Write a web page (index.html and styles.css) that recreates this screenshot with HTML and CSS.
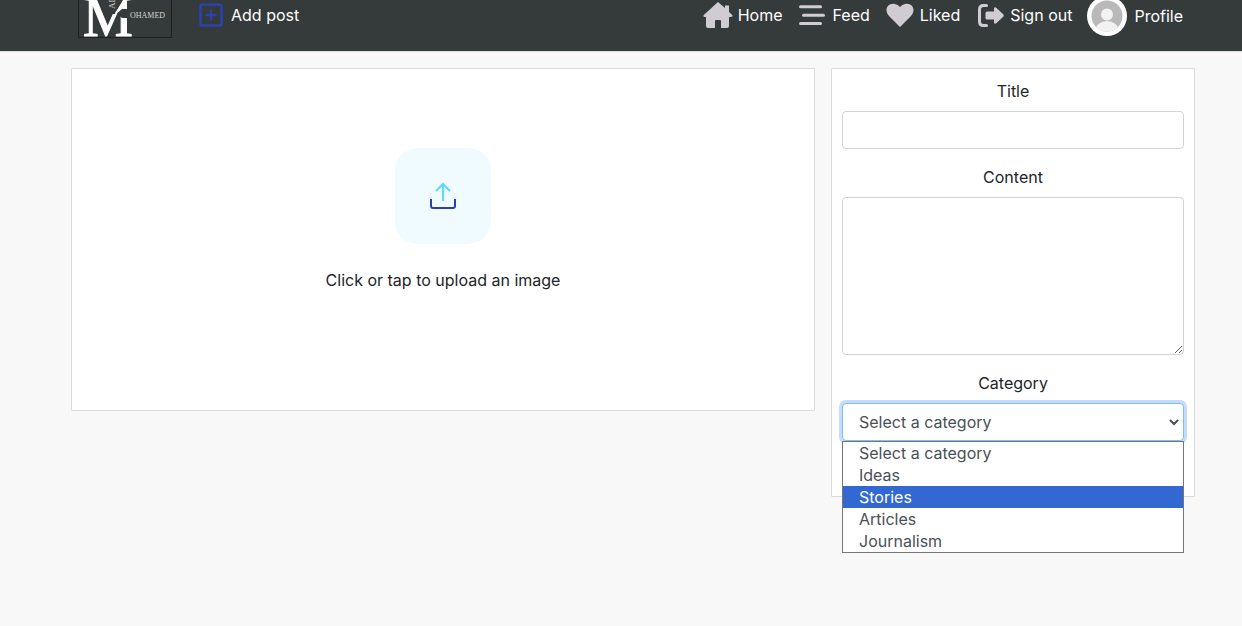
FILE: index.html
```html
<!DOCTYPE html>
<html lang="en">
<head>
<meta charset="utf-8">
<meta name="viewport" content="width=device-width, initial-scale=1">
<title>Add post</title>
<link rel="stylesheet" href="styles.css">
</head>
<body>
<header class="header">
  <div class="container header-inner">
    <a class="brand" href="#" aria-label="Home page">
      <svg class="logo" viewBox="0 0 94 38" aria-hidden="true">
        <path d="M0.5 0V37.5H93.500V0" fill="none" stroke="#1c2020"/>
        <text class="logo-initial" x="5" y="36">M</text>
        <path d="M37 14L45 0H32V14zM42 8H53V18H44L38 12z" fill="#353a3a"/>
        <path d="M37 13L45 1V0H49V9H44L38 14z" fill="#fff"/>
        <text class="logo-name" x="52" y="18">OHAMED</text>
        <text class="logo-side" transform="translate(37 9) rotate(-90)">AL</text>
      </svg>
    </a>
    <a class="nav-link add-link" href="#">
      <svg class="icon" viewBox="0 0 30 30" aria-hidden="true"><rect x="4.500" y="4.500" width="21" height="21" rx="2" fill="none" stroke="#2c41ab" stroke-width="2.700"/><path d="M15 9.500v11M9.500 15h11" stroke="#2c41ab" stroke-width="2.500"/></svg>
      Add post</a>
    <nav class="nav">
      <a class="nav-link" href="#">
        <svg class="icon" viewBox="0 0 30 30" aria-hidden="true"><path d="M15 2L22 8V5.500h4V12L29.500 15.300Q30 17 28 17H26V26Q26 28 24 28H18V21Q18 20 17 20H13Q12 20 12 21V28H5Q3 28 3 26V17H1.500Q0 17 .5 15.300Z" fill="#cfcdd3"/></svg>
        Home</a>
      <a class="nav-link" href="#">
        <svg class="icon" viewBox="0 0 30 30" aria-hidden="true"><path d="M3.500 6.700H23.500M6.500 15.300H26.500M3.500 23.500H23.500" stroke="#cfcdd3" stroke-width="3" stroke-linecap="round"/></svg>
        Feed</a>
      <a class="nav-link" href="#">
        <svg class="icon" viewBox="0 0 30 30" aria-hidden="true"><path d="M15 27L4 16C-2 9 4 2 10 4Q13 4.500 15 7Q17 4.500 20 4C26 2 32 9 26 16Z" fill="#cfcdd3"/></svg>
        Liked</a>
      <a class="nav-link" href="#">
        <svg class="icon" viewBox="0 0 30 30" aria-hidden="true"><path d="M11.500 5.500H8.500Q4.500 5.500 4.500 9.500V21.500Q4.500 25.500 8.500 25.500H11.500" fill="none" stroke="#cfcdd3" stroke-width="3" stroke-linecap="round"/><path d="M12 11.500H19V8Q20 6.500 21.500 8L28.500 14.500Q29 15.500 28.500 16.500L21.500 23Q20 24.500 19 23V19.500H12Q10.500 19.500 10.500 18V13Q10.500 11.500 12 11.500Z" fill="#cfcdd3"/></svg>
        Sign out</a>
      <a class="nav-link profile-link" href="#">
        <svg class="avatar" viewBox="0 0 40 40" aria-hidden="true"><defs><clipPath id="face"><circle cx="20" cy="20" r="15.500"/></clipPath></defs><circle cx="20" cy="20" r="20" fill="#fff"/><g clip-path="url(#face)"><path d="M0 0H40V40H0z" fill="#b9b9b9"/><circle cx="20" cy="18.500" r="6" fill="#f2f2f2"/><ellipse cx="20" cy="34" rx="11.500" ry="9" fill="#f2f2f2"/></g></svg>
        Profile</a>
    </nav>
  </div>
</header>
<main class="container">
  <form class="post-form">
    <section class="card upload-card">
      <label class="upload" for="image">
        <svg class="upload-icon" viewBox="0 0 96 96" aria-hidden="true"><path d="M26 0H70Q96 0 96 26V70Q96 96 70 96H26Q0 96 0 70V26Q0 0 26 0Z" fill="#f0fbff"/><path d="M48 53V36M41 43L48 36L55 43" fill="none" stroke="#5fd7ff" stroke-width="2"/><path d="M36 51V58Q36 60 38 60H58Q60 60 60 58V51" fill="none" stroke="#2c41ab" stroke-width="2"/></svg>
        <span>Click or tap to upload an image</span>
      </label>
      <input class="file-input" id="image" type="file" accept="image/*">
    </section>
    <section class="card fields">
      <div class="field">
        <label for="title">Title</label>
        <input class="control" id="title" type="text">
      </div>
      <div class="field">
        <label for="content">Content</label>
        <textarea class="control content-box" id="content"></textarea>
      </div>
      <div class="field">
        <label for="category">Category</label>
        <div class="select">
          <select class="control select-control" id="category">
            <option>Select a category</option>
            <option>Ideas</option>
            <option>Stories</option>
            <option>Articles</option>
            <option>Journalism</option>
          </select>
          <svg class="chevron" viewBox="0 0 10 8" aria-hidden="true"><path d="M1 2L5 6L9 2" fill="none" stroke="#495057" stroke-width="2"/></svg>
          <ul class="menu" role="listbox" aria-label="Category">
            <li role="option">Select a category</li>
            <li role="option">Ideas</li>
            <li class="active" role="option" aria-selected="true">Stories</li>
            <li role="option">Articles</li>
            <li role="option">Journalism</li>
          </ul>
        </div>
      </div>
    </section>
  </form>
</main>
</body>
</html>
```
FILE: styles.css
```css
* { box-sizing: border-box; }
body {
  min-height: 100vh;
  margin: 0;
  padding-left: 24px;
  background: #f8f8f8;
  color: #212529;
  font: 16px/24px Inter, "Liberation Sans", sans-serif;
}
.container { max-width: 1140px; margin: 0 auto; padding: 0 8px; }
.header {
  margin-left: -24px;
  padding: 0 0 13px 24px;
  background: #353a3a;
  border-bottom: 1px solid #dbdbdb;
  overflow: hidden;
}
.header-inner { display: flex; align-items: flex-start; padding: 0 20px 0 15px; }
.brand { display: block; height: 38px; }
.logo { display: block; width: 94px; height: 38px; }
.logo text { fill: #fff; font-family: "Liberation Serif", serif; }
.logo .logo-initial { font-size: 56px; stroke: #fff; stroke-width: 1px; }
.logo .logo-name { font-size: 8px; fill: #d5d7d7; }
.logo .logo-side { font-size: 9px; fill: #d5d7d7; }
.nav { display: flex; gap: 15px; margin-left: auto; }
.nav-link {
  display: flex;
  align-items: center;
  gap: 5px;
  height: 30px;
  color: #fff;
  text-decoration: none;
  white-space: nowrap;
}
.add-link { margin-left: 24px; }
.icon { width: 30px; height: 30px; }
.profile-link { gap: 7px; height: 32px; }
.avatar { width: 40px; height: 40px; }
.post-form {
  display: grid;
  grid-template-columns: 744fr 364fr;
  align-items: start;
  gap: 16px;
  padding: 16px 0;
}
.card { background: #fff; border: 1px solid #dbdbdb; border-radius: 1px; }
.upload-card { position: relative; }
.upload {
  display: flex;
  flex-direction: column;
  align-items: center;
  gap: 24px;
  padding: 79px 16px 118px;
  cursor: pointer;
}
.upload-icon { width: 96px; height: 96px; }
.file-input { position: absolute; width: 1px; height: 1px; opacity: 0; }
.fields { display: grid; gap: 16px; padding: 10px 10px 55px; }
.field { display: flex; flex-direction: column; gap: 8px; }
.field > label { text-align: center; }
.control {
  display: block;
  width: 100%;
  height: 38px;
  padding: 6px 12px;
  border: 1px solid #ced4da;
  border-radius: 4px;
  background: #fff;
  color: #495057;
  font: inherit;
}
.content-box { height: 158px; resize: vertical; }
.select { position: relative; }
.select-control {
  appearance: none;
  padding: 6px 16px;
  border-color: #80bdff;
  box-shadow: 0 0 0 3px #c5dbff;
  outline: 0;
}
.chevron { position: absolute; top: 15px; right: 5px; width: 10px; height: 8px; pointer-events: none; }
.menu {
  position: absolute;
  top: 100%;
  left: 0;
  right: 0;
  margin: 0;
  padding: 0;
  border: 1px solid #767676;
  background: #fff;
  color: #495057;
  line-height: 22px;
  list-style: none;
}
.menu li { padding: 0 16px; }
.menu .active { background: #3367d1; color: #fff; }
```
